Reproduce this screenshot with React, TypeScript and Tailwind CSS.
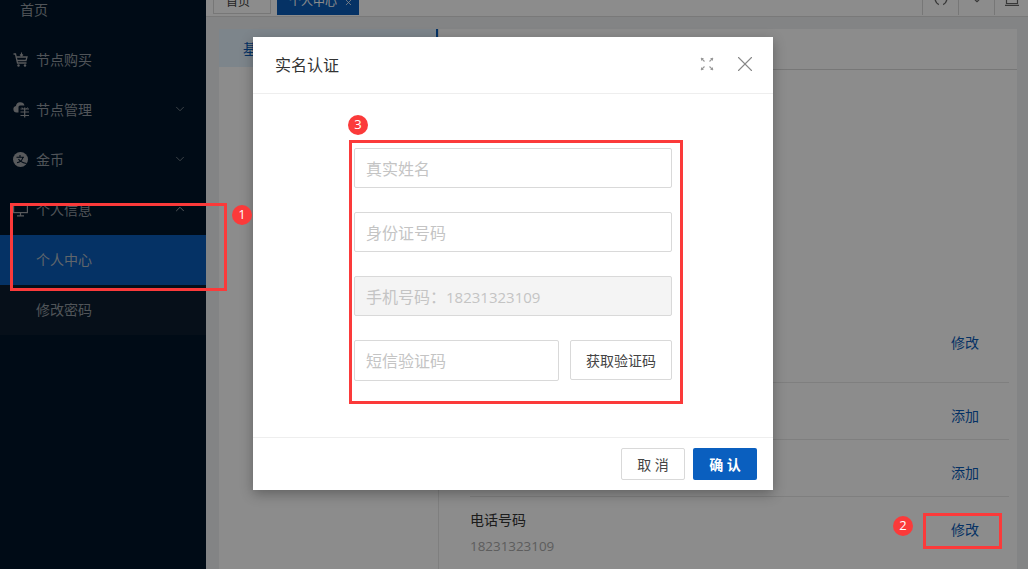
import { ChevronDown, ChevronUp, X } from 'lucide-react';

const font = { fontFamily: '"Open Sans", "Noto Sans CJK SC", sans-serif' };

const CartIcon = () => (
  <svg width="15" height="15" viewBox="0 0 15 15" fill="none" stroke="currentColor" strokeWidth="1.300">
    <path d="M0.500 2h2l2 9h9" />
    <path d="M3.200 5h10.800l-1 3.500H4" />
    <path d="M8.500 0.500v3.500M7 2.500l1.500 1.500L10 2.500" strokeWidth="1.100" />
    <circle cx="5.500" cy="13.500" r="1.200" fill="currentColor" stroke="none" />
    <circle cx="12" cy="13.500" r="1.200" fill="currentColor" stroke="none" />
  </svg>
);

const CloudIcon = () => (
  <svg width="17" height="17" viewBox="0 0 17 17" fill="none" stroke="currentColor">
    <path d="M5.500 11.500H3.500a3.300 3.300 0 0 1-.6-6.500A4.400 4.400 0 0 1 11.500 4.500H7a1.500 1.500 0 0 0-1.500 1.500z" fill="currentColor" stroke="none" />
    <path d="M7.500 8h8.500M7.500 11h8.500M7.500 14.500h8.500M11.700 6.500v10" strokeWidth="1.200" />
    <path d="M9 6.500l1 1.500M14.500 6.500l-1 1.500" strokeWidth="1" />
  </svg>
);

const CoinIcon = () => (
  <svg width="15" height="15" viewBox="0 0 15 15">
    <circle cx="7.500" cy="7.500" r="7.500" fill="currentColor" />
    <path d="M3.500 5.200h7.500M7 3v2.200M10 5.200c-.6 3-3 5-6 5.600M5.500 7c1 2 3.500 3.500 8 4.500" fill="none" stroke="#001529" strokeWidth="1.100" />
  </svg>
);

const MonitorIcon = () => (
  <svg width="15" height="15" viewBox="0 0 15 15" fill="none" stroke="currentColor" strokeWidth="1.200">
    <rect x="0.600" y="1.600" width="13.800" height="9" />
    <path d="M7.500 10.600v3M4 13.800h7" />
  </svg>
);

const ExpandIcon = () => (
  <svg width="14" height="14" viewBox="0 0 14 14" fill="none" stroke="#999" strokeWidth="1.100">
    <path d="M1 1l3.500 3.500M13 1L9.500 4.500M1 13l3.500-3.500M13 13L9.500 9.500" />
    <path d="M1 1h3L1 4zM13 1h-3l3 3zM1 13h3l-3-3zM13 13h-3l3-3z" fill="#999" stroke="none" />
  </svg>
);

const RefreshIcon = () => (
  <svg width="14" height="14" viewBox="0 0 14 14" fill="none" stroke="currentColor" strokeWidth="1.400">
    <path d="M2.200 4a6 6 0 0 0 2.600 8.600M11.800 4a6 6 0 0 1-2.600 8.600" />
  </svg>
);

const FrameIcon = () => (
  <svg width="14" height="14" viewBox="0 0 14 14" fill="none" stroke="currentColor" strokeWidth="1.200" className="shrink-0">
    <path d="M1.500 0v11.500h11V0M0 13.400h14" />
  </svg>
);

const MenuItem = ({ icon, label, arrow }: { icon?: React.ReactNode; label: string; arrow?: 'up' | 'down' }) => (
  <div className="flex h-[50px] items-center pl-[13px] pr-[19px] text-[14px] text-[#9299a0]">
    <span className="flex w-[23px] shrink-0 text-[#a0a4a8]">{icon}</span>
    <span className="flex-1">{label}</span>
    {arrow === 'down' && <ChevronDown size={14} strokeWidth={1.300} />}
    {arrow === 'up' && <ChevronUp size={14} strokeWidth={1.300} className="text-[#d0d0d0]" />}
  </div>
);

const Row = ({ action, className }: { action: string; className: string }) => (
  <div className={`flex justify-end border-b border-[#e8e8e8] pr-[30px] text-[14px] text-[#0a5cb8] ${className}`}>
    {action}
  </div>
);

const Badge = ({ n, className }: { n: number; className: string }) => (
  <div className={`absolute flex h-[20px] w-[20px] items-center justify-center rounded-full bg-[#fb3a3a] text-[13px] font-medium text-white ${className}`}>
    {n}
  </div>
);

export default function App() {
  return (
    <div className="relative flex h-[569px] w-[1028px] overflow-hidden bg-white" style={font}>
      {/* sidebar */}
      <div className="w-[206px] shrink-0 bg-[#001529]">
        <div className="-mt-[15px]">
          <div className="flex h-[49px] items-center pl-[20px] text-[14px] text-[#9299a0]">首页</div>
          <MenuItem icon={<CartIcon />} label="节点购买" />
          <MenuItem icon={<CloudIcon />} label="节点管理" arrow="down" />
          <MenuItem icon={<CoinIcon />} label="金币" arrow="down" />
          <MenuItem icon={<MonitorIcon />} label="个人信息" arrow="up" />
          <div className="mt-[1px] bg-[#0b1d2e]">
            <div className="flex h-[50px] items-center bg-[#0a5cb8] pb-[2px] pl-[36px] text-[14px] text-[#b0bac4]">个人中心</div>
            <div className="flex h-[50px] items-center pb-[2px] pl-[36px] text-[14px] text-[#9299a0]">修改密码</div>
          </div>
        </div>
      </div>

      {/* main */}
      <div className="flex min-w-0 flex-1 flex-col bg-[#eef0f2]">
        <div className="flex h-[17px] shrink-0 items-start justify-between overflow-hidden border-b border-[#dcdcdc] bg-white pl-[7px]">
          <div className="-mt-[11px] flex items-start gap-[6px]">
            <div className="flex h-[25px] w-[58px] items-center border border-[#d9d9d9] pl-[12px] text-[12px] text-[#444]">首页</div>
            <div className="flex h-[26px] w-[82px] items-center gap-[7px] bg-[#0a5cb8] pl-[12px] text-[12px] text-white">
              个人中心
              <X size={9} />
            </div>
          </div>
          <div className="flex text-[#666]">
            <div className="flex h-[15px] w-[36px] items-end justify-center border-l border-[#d9d9d9] pb-[9px]"><RefreshIcon /></div>
            <div className="flex h-[15px] w-[36px] items-end justify-center border-l border-[#d9d9d9] pb-[8px]"><ChevronDown size={14} /></div>
            <div className="flex h-[15px] w-[34px] items-end justify-center border-l border-[#d9d9d9] pb-[9px]"><FrameIcon /></div>
          </div>
        </div>

        <div className="flex min-h-0 flex-1 pl-[13px] pr-[11px] pt-[12px]">
          <div className="flex flex-1 bg-white">
            <div className="w-[219px] shrink-0">
              <div className="flex h-[38px] items-center border-r-2 border-[#0a5cb8] bg-[#e3f2fd] pl-[24px] text-[14px] text-[#0a5cb8]">基本信息</div>
            </div>
            <div className="flex-1 border-l border-[#e8e8e8]">
              <div className="h-[41px] border-b border-[#d9d9d9]" />
              <div className="pl-[31px] pr-[8px]">
                <Row action="修改" className="h-[313px] items-end pb-[29px]" />
                <Row action="添加" className="h-[57px] items-center pt-[9px]" />
                <Row action="添加" className="h-[57px] items-center pt-[9px]" />
                <div className="flex items-start justify-between pr-[30px] pt-[13px]">
                  <div className="text-[14px]">
                    <div className="leading-[20px] text-[#333]">电话号码</div>
                    <div className="mt-[6px] text-[13.4px] leading-[20px] text-[#aaa]">18231323109</div>
                  </div>
                  <div className="mt-[9px] text-[14px] text-[#0a5cb8]">修改</div>
                </div>
              </div>
            </div>
          </div>
        </div>
      </div>

      {/* mask */}
      <div className="absolute inset-0 bg-black/45" />

      {/* dialog */}
      <div className="absolute left-[253px] top-[37px] flex h-[453px] w-[520px] flex-col bg-white shadow-[0_4px_12px_rgba(0,0,0,0.3)]">
        <div className="flex h-[57px] shrink-0 items-center justify-between border-b border-[#eeeeee] pl-[22px] pr-[15px] text-[16px] text-[#333]">
          <span className="-mt-[1px]">实名认证</span>
          <div className="-mt-[3px] flex items-center gap-[18px]">
            <ExpandIcon />
            <X size={26} strokeWidth={1} className="text-[#888]" />
          </div>
        </div>
        <div className="flex flex-1 flex-col gap-[24px] pl-[101px] pt-[54px]">
          <input className="h-[40px] w-[318px] rounded-[2px] border border-[#d9d9d9] px-[11px] pt-[2px] text-[16px] outline-none placeholder:text-[#c4c4c4]" placeholder="真实姓名" />
          <input className="h-[40px] w-[318px] rounded-[2px] border border-[#d9d9d9] px-[11px] pt-[2px] text-[16px] outline-none placeholder:text-[#c4c4c4]" placeholder="身份证号码" />
          <div className="flex h-[40px] w-[318px] items-center rounded-[2px] border border-[#d9d9d9] bg-[#f4f4f4] px-[11px] pt-[2px] text-[16px] text-[#c4c4c4]">
            手机号码：<span className="text-[15px]">18231323109</span>
          </div>
          <div className="flex w-[318px] items-start justify-between">
            <input className="h-[41px] w-[205px] rounded-[2px] border border-[#d9d9d9] px-[11px] text-[16px] outline-none placeholder:text-[#c4c4c4]" placeholder="短信验证码" />
            <button className="h-[40px] w-[102px] rounded-[2px] border border-[#d9d9d9] text-[14px] text-[#444]">获取验证码</button>
          </div>
        </div>
        <div className="flex h-[53px] shrink-0 items-start justify-end gap-[8px] border-t border-[#eeeeee] pr-[16px] pt-[10px]">
          <button className="h-[32px] w-[64px] rounded-[2px] border border-[#d9d9d9] text-[14px] text-[#444]">取 消</button>
          <button className="h-[32px] w-[64px] rounded-[2px] bg-[#0a5fbf] text-[14px] font-bold text-white">确 认</button>
        </div>
      </div>

      {/* annotations */}
      <div className="absolute left-[10px] top-[203px] h-[88px] w-[217px] border-[3px] border-[#fb3a3a]" />
      <div className="absolute left-[923px] top-[513px] h-[36px] w-[79px] border-[3px] border-[#fb3a3a]" />
      <div className="absolute left-[349px] top-[140px] h-[264px] w-[334px] border-[3px] border-[#fb3a3a]" />
      <Badge n={1} className="left-[232px] top-[205px]" />
      <Badge n={2} className="left-[893px] top-[516px]" />
      <Badge n={3} className="left-[348px] top-[115px]" />
    </div>
  );
}
